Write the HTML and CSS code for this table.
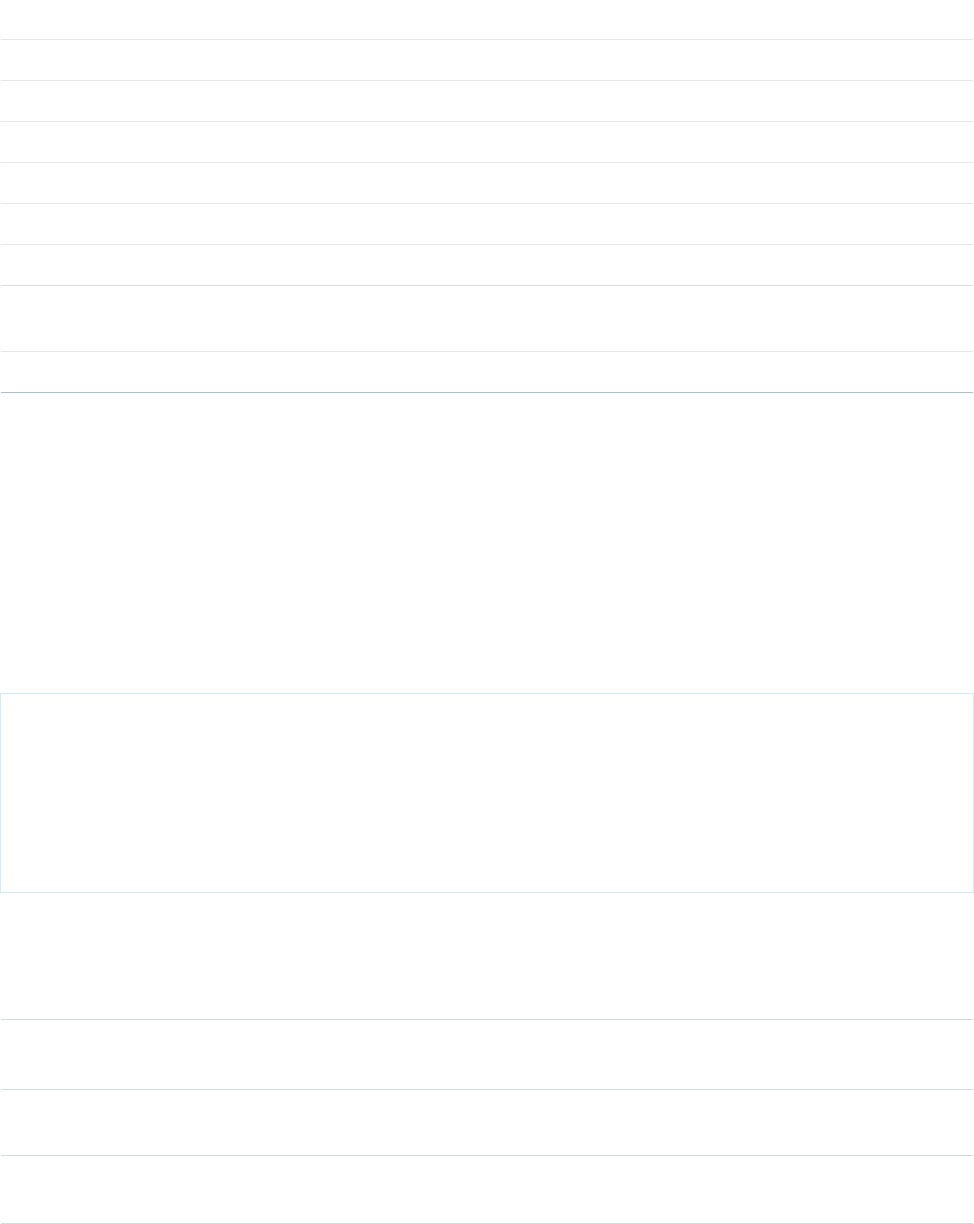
FILE: index.html
```html
<!DOCTYPE html>
<html>

<head>
  <meta charset="utf-8">
  <meta name="viewport" content="width=device-width, initial-scale=1">
  <title>Page</title>
  <link rel="stylesheet" href="styles.css">
</head>

<body>
	<div class="list">
		<div class="row first"></div>
		<div class="row"></div>
		<div class="row"></div>
		<div class="row"></div>
		<div class="row"></div>
		<div class="row"></div>
		<div class="row mid"></div>
		<div class="row tall"></div>
		<div class="row end"></div>
	</div>

	<div class="panel"></div>

	<div class="list bottom">
		<div class="row r1"></div>
		<div class="row r2"></div>
		<div class="row r3"></div>
		<div class="row r4"></div>
	</div>
</body>

</html>
```

FILE: styles.css
```css
body {
	margin: 0;
	background-color: #ffffff;
	font-family: "Liberation Sans", Arial, sans-serif;
}

.list {
	padding: 0 1px;
}

.row {
	height: 40px;
	border-bottom: 1px solid #e3e8eb;
}

.row.first {
	height: 39px;
}

.row.mid {
	border-bottom-color: #d9dfe5;
}

.row.tall {
	height: 65px;
}

.row.end {
	height: 40px;
	border-bottom-color: #a9c0d0;
}

.panel {
	margin-top: 300px;
	width: 972px;
	height: 198px;
	border: 1px solid #d3ebf4;
}

.bottom .row {
	border-bottom-color: #d3dadb;
}

.bottom .r1 {
	height: 126px;
}

.bottom .r2 {
	height: 69px;
}

.bottom .r3 {
	height: 65px;
}

.bottom .r4 {
	height: 67px;
}
```
